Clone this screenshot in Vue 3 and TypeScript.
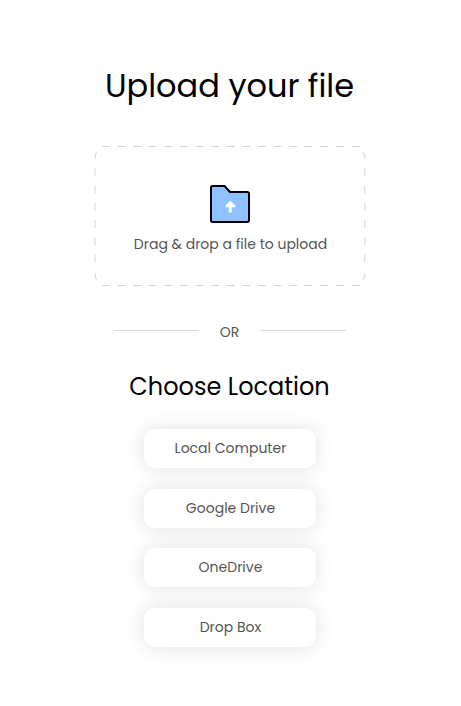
<script setup lang="ts">
const locations: string[] = ['Local Computer', 'Google Drive', 'OneDrive', 'Drop Box']
</script>

<template>
  <main class="page">
    <h1 class="title">Upload your file</h1>

    <section class="dropzone">
      <svg class="outline" viewBox="0 0 272 141" fill="none" stroke-width="1">
        <path d="M8 .5H265.5M8 139.5H265.5" stroke="#d2d2d2" stroke-dasharray="7.8 7.8" />
        <path d="M2.6 6Q1.2 8 1 13M1 22.5V118M1 127Q1.2 132 2.6 134M269.2 6Q270.6 8 270.8 13M270.8 22.5V118M270.8 127Q270.6 132 269.2 134" stroke="#dcdcdc" stroke-width="1.2" stroke-dasharray="8 9.2" />
      </svg>
      <svg class="folder" viewBox="0 0 42 40">
        <path d="M3.5 2H15.5L21 8H38Q40 8 40 10V36Q40 38 38 38H3.5Q2 38 2 36V4Q2 2 3.5 2Z" fill="#8ec1ff" stroke="#000" stroke-width="2" stroke-linejoin="round" />
        <path d="M21.3 17L16.5 21.7Q16.2 23 17.5 23H20.2V28Q21.3 29.2 22.4 28V23H25.3Q26.6 23 26.2 21.7Z" fill="#fff" stroke="#fff" stroke-width=".7" stroke-linejoin="round" />
      </svg>
      <p class="prompt">Drag &amp; drop a file to upload</p>
    </section>

    <div class="divider"><i></i><span>OR</span><i></i></div>

    <h2 class="subtitle">Choose Location</h2>

    <div class="locations">
      <button v-for="location in locations" :key="location" type="button">{{ location }}</button>
    </div>
  </main>
</template>

<style>
body { background: #fff; }
</style>

<style scoped>
.page {
  box-sizing: border-box;
  width: 460px;
  height: 706px;
  padding-top: 62px;
  display: flex;
  flex-direction: column;
  align-items: center;
  color: #000;
  font-family: Poppins, Inter, sans-serif;
}
h1, h2, p { margin: 0; font-weight: 400; white-space: nowrap; }
.title { height: 84px; padding-right: 1px; font-size: 32px; line-height: 48px; }
.dropzone {
  position: relative;
  width: 272px;
  height: 141px;
  display: flex;
  flex-direction: column;
  align-items: center;
}
.outline { position: absolute; inset: 0; width: 272px; height: 141px; }
.folder { width: 42px; height: 40px; margin-top: 38px; }
.prompt { margin-top: 10px; padding-left: 1px; font-size: 14px; line-height: 20px; color: #555; }
.divider {
  margin-top: 35px;
  width: 232px;
  height: 20px;
  display: flex;
  justify-content: space-between;
  font-size: 14px;
  line-height: 20px;
  color: #555;
}
.divider span { padding-right: 1px; }
.divider i { width: 85px; height: 1px; margin-top: 8px; background: #d8d8d8; }
.subtitle { margin-top: 27px; padding-right: 1px; font-size: 24px; line-height: 36px; }
.locations { margin-top: 24px; display: flex; flex-direction: column; gap: 20.6px; }
.locations button {
  box-sizing: border-box;
  width: 172.4px;
  height: 39px;
  padding: 0 0 0 1px;
  border: 0;
  border-radius: 10px;
  background: #fff;
  box-shadow: 0 0 20px rgba(0, 0, 0, .12);
  color: #555;
  font: 400 14px/39px Poppins, Inter, sans-serif;
}
</style>
